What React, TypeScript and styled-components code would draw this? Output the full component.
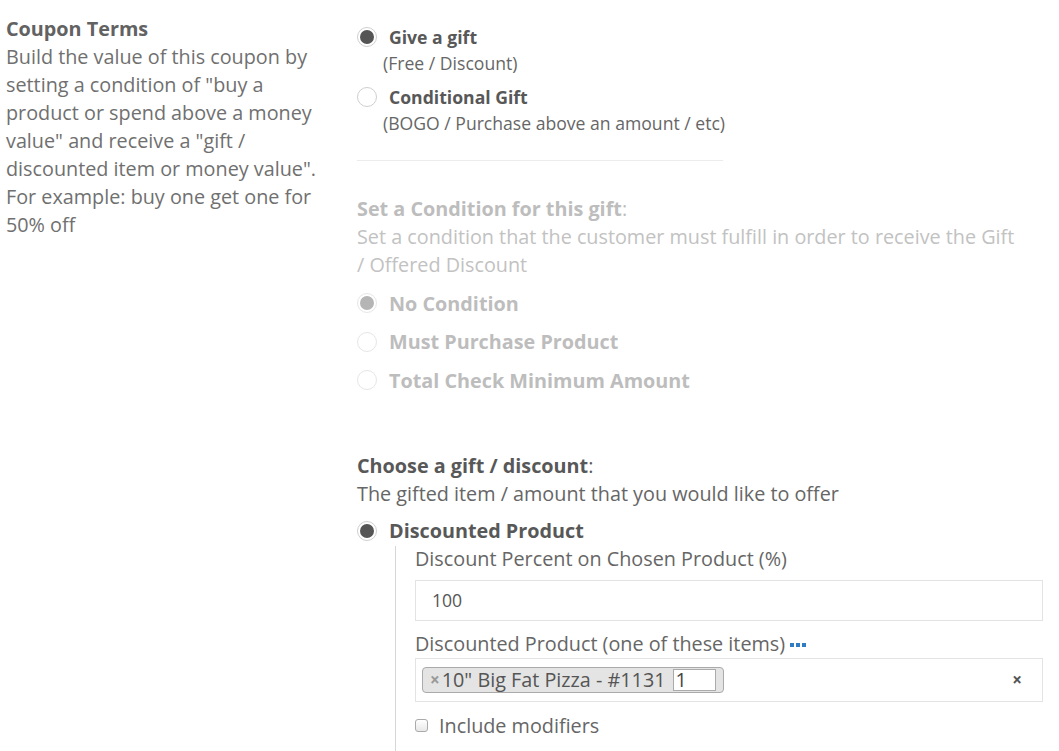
import React from "react";
import styled, { createGlobalStyle } from "styled-components";

const Global = createGlobalStyle`
  html, body { margin: 0; padding: 0; background: #fff; }
  body { font-family: "Open Sans", "Liberation Sans", sans-serif; color: #666; }
  * { box-sizing: border-box; }
`;

const Page = styled.div`
  display: grid;
  grid-template-columns: 325px 1fr;
  column-gap: 26px;
  padding: 15px 16px 0 6px;
  width: 1059px;
  height: 751px;
  overflow: hidden;
`;

const Intro = styled.div`
  font-size: 19.8px;
  line-height: 28px;
  color: #707070;
`;

const IntroTitle = styled.div`
  font-weight: 700;
  color: #626262;
`;

const Main = styled.div`
  padding-top: 9px;
  display: flex;
  flex-direction: column;
`;

const RadioRow = styled.label<{ $h?: number; $mt?: number }>`
  display: flex;
  align-items: center;
  gap: 12px;
  height: ${(p) => p.$h ?? 26}px;
  margin-top: ${(p) => p.$mt ?? 0}px;
`;

const Circle = styled.span<{ $checked?: boolean; $disabled?: boolean }>`
  width: 20px;
  height: 20px;
  border-radius: 50%;
  border: 1px solid ${(p) => (p.$disabled ? "#e6e6e6" : "#cfcfcf")};
  background: #fff;
  display: flex;
  align-items: center;
  justify-content: center;
  flex: none;
  &::after {
    content: "";
    display: ${(p) => (p.$checked ? "block" : "none")};
    width: 14px;
    height: 14px;
    border-radius: 50%;
    background: ${(p) => (p.$disabled ? "#b5b5b5" : "#555")};
  }
`;

const RadioLabel = styled.span<{ $disabled?: boolean; $size?: number }>`
  font-weight: 700;
  font-size: ${(p) => p.$size ?? 17.6}px;
  color: ${(p) => (p.$disabled ? "#bdbdbd" : "#585858")};
`;

const SubText = styled.div`
  font-size: 17.6px;
  line-height: 26px;
  color: #666;
  padding-left: 26px;
`;

const Divider = styled.hr`
  width: 366px;
  margin: 24px 0 0 0;
  border: 0;
  border-top: 1px solid #ececec;
`;

const SectionTitle = styled.div<{ $disabled?: boolean; $mt: number }>`
  margin-top: ${(p) => p.$mt}px;
  font-size: 19.8px;
  line-height: 28px;
  color: ${(p) => (p.$disabled ? "#bdbdbd" : "#585858")};
  b { font-weight: 700; }
`;

const SectionText = styled.div<{ $disabled?: boolean }>`
  max-width: 664px;
  font-size: 19.8px;
  line-height: 28px;
  color: ${(p) => (p.$disabled ? "#c2c2c2" : "#666")};
`;

const Options = styled.div`
  margin-top: 5px;
  display: flex;
  flex-direction: column;
`;

const Nested = styled.div`
  margin-left: 38px;
  border-left: 1px solid #d6d6d6;
  padding: 0 0 24px 19px;
  display: flex;
  flex-direction: column;
`;

const FieldLabel = styled.div<{ $mt?: number }>`
  margin-top: ${(p) => p.$mt ?? 0}px;
  font-size: 19.8px;
  line-height: 26px;
  color: #666;
  display: flex;
  align-items: center;
  gap: 5px;
`;

const Dots = styled.span`
  display: inline-flex;
  gap: 2px;
  margin-top: 2px;
  span {
    width: 4px;
    height: 4px;
    background: #2f7bc4;
  }
`;

const TextBox = styled.div`
  margin-top: 8px;
  height: 41px;
  border: 1px solid #e3e3e3;
  padding: 0 16px;
  display: flex;
  align-items: center;
  font-size: 17.6px;
  color: #555;
`;

const SelectBox = styled.div`
  margin-top: 1px;
  height: 44px;
  border: 1px solid #e3e3e3;
  padding: 0 20px 0 6px;
  display: flex;
  align-items: center;
  justify-content: space-between;
`;

const Tag = styled.div`
  height: 26px;
  display: flex;
  align-items: center;
  gap: 2px;
  background: #e4e4e4;
  border: 1px solid #aaa;
  border-radius: 4px;
  padding: 0 7px 0 7px;
  font-size: 19.8px;
  color: #555;
`;

const TagRemove = styled.span`
  font-size: 17px;
  font-weight: 700;
  color: #999;
`;

const QtyInput = styled.span`
  width: 43px;
  height: 22px;
  margin-left: 5px;
  background: #fff;
  border: 1px solid #aaa;
  font-size: 19.8px;
  line-height: 20px;
  padding-left: 2px;
  color: #444;
`;

const Clear = styled.span`
  font-size: 17px;
  font-weight: 700;
  color: #555;
`;

const CheckRow = styled.label`
  margin-top: 11px;
  display: flex;
  align-items: center;
  gap: 11px;
  height: 26px;
  font-size: 19.8px;
  color: #666;
`;

const Box = styled.span`
  width: 13px;
  height: 13px;
  border: 1px solid #aaa;
  border-radius: 3px;
  background: linear-gradient(#fff, #e8e8e8);
  flex: none;
`;

export default function App() {
  return (
    <>
      <Global />
      <Page>
        <Intro>
          <IntroTitle>Coupon Terms</IntroTitle>
          Build the value of this coupon by setting a condition of "buy a product or spend above a money
          value" and receive a "gift / discounted item or money value". For example: buy one get one for
          50% off
        </Intro>
        <Main>
          <RadioRow>
            <Circle $checked />
            <RadioLabel>Give a gift</RadioLabel>
          </RadioRow>
          <SubText>(Free / Discount)</SubText>
          <RadioRow $mt={8}>
            <Circle />
            <RadioLabel>Conditional Gift</RadioLabel>
          </RadioRow>
          <SubText>(BOGO / Purchase above an amount / etc)</SubText>
          <Divider />
          <SectionTitle $disabled $mt={34}>
            <b>Set a Condition for this gift</b>:
          </SectionTitle>
          <SectionText $disabled>
            Set a condition that the customer must fulfill in order to receive the Gift / Offered Discount
          </SectionText>
          <Options>
            <RadioRow $h={38.5}>
              <Circle $checked $disabled />
              <RadioLabel $disabled $size={19.8}>No Condition</RadioLabel>
            </RadioRow>
            <RadioRow $h={38.5}>
              <Circle $disabled />
              <RadioLabel $disabled $size={19.8}>Must Purchase Product</RadioLabel>
            </RadioRow>
            <RadioRow $h={38.5}>
              <Circle $disabled />
              <RadioLabel $disabled $size={19.8}>Total Check Minimum Amount</RadioLabel>
            </RadioRow>
          </Options>
          <SectionTitle $mt={52}>
            <b>Choose a gift / discount</b>:
          </SectionTitle>
          <SectionText>The gifted item / amount that you would like to offer</SectionText>
          <RadioRow $h={30} $mt={8}>
            <Circle $checked />
            <RadioLabel $size={19.8}>Discounted Product</RadioLabel>
          </RadioRow>
          <Nested>
            <FieldLabel>Discount Percent on Chosen Product (%)</FieldLabel>
            <TextBox>100</TextBox>
            <FieldLabel $mt={10}>
              Discounted Product (one of these items)
              <Dots>
                <span />
                <span />
                <span />
              </Dots>
            </FieldLabel>
            <SelectBox>
              <Tag>
                <TagRemove>×</TagRemove>
                10" Big Fat Pizza - #1131
                <QtyInput>1</QtyInput>
              </Tag>
              <Clear>×</Clear>
            </SelectBox>
            <CheckRow>
              <Box />
              Include modifiers
            </CheckRow>
          </Nested>
        </Main>
      </Page>
    </>
  );
}
